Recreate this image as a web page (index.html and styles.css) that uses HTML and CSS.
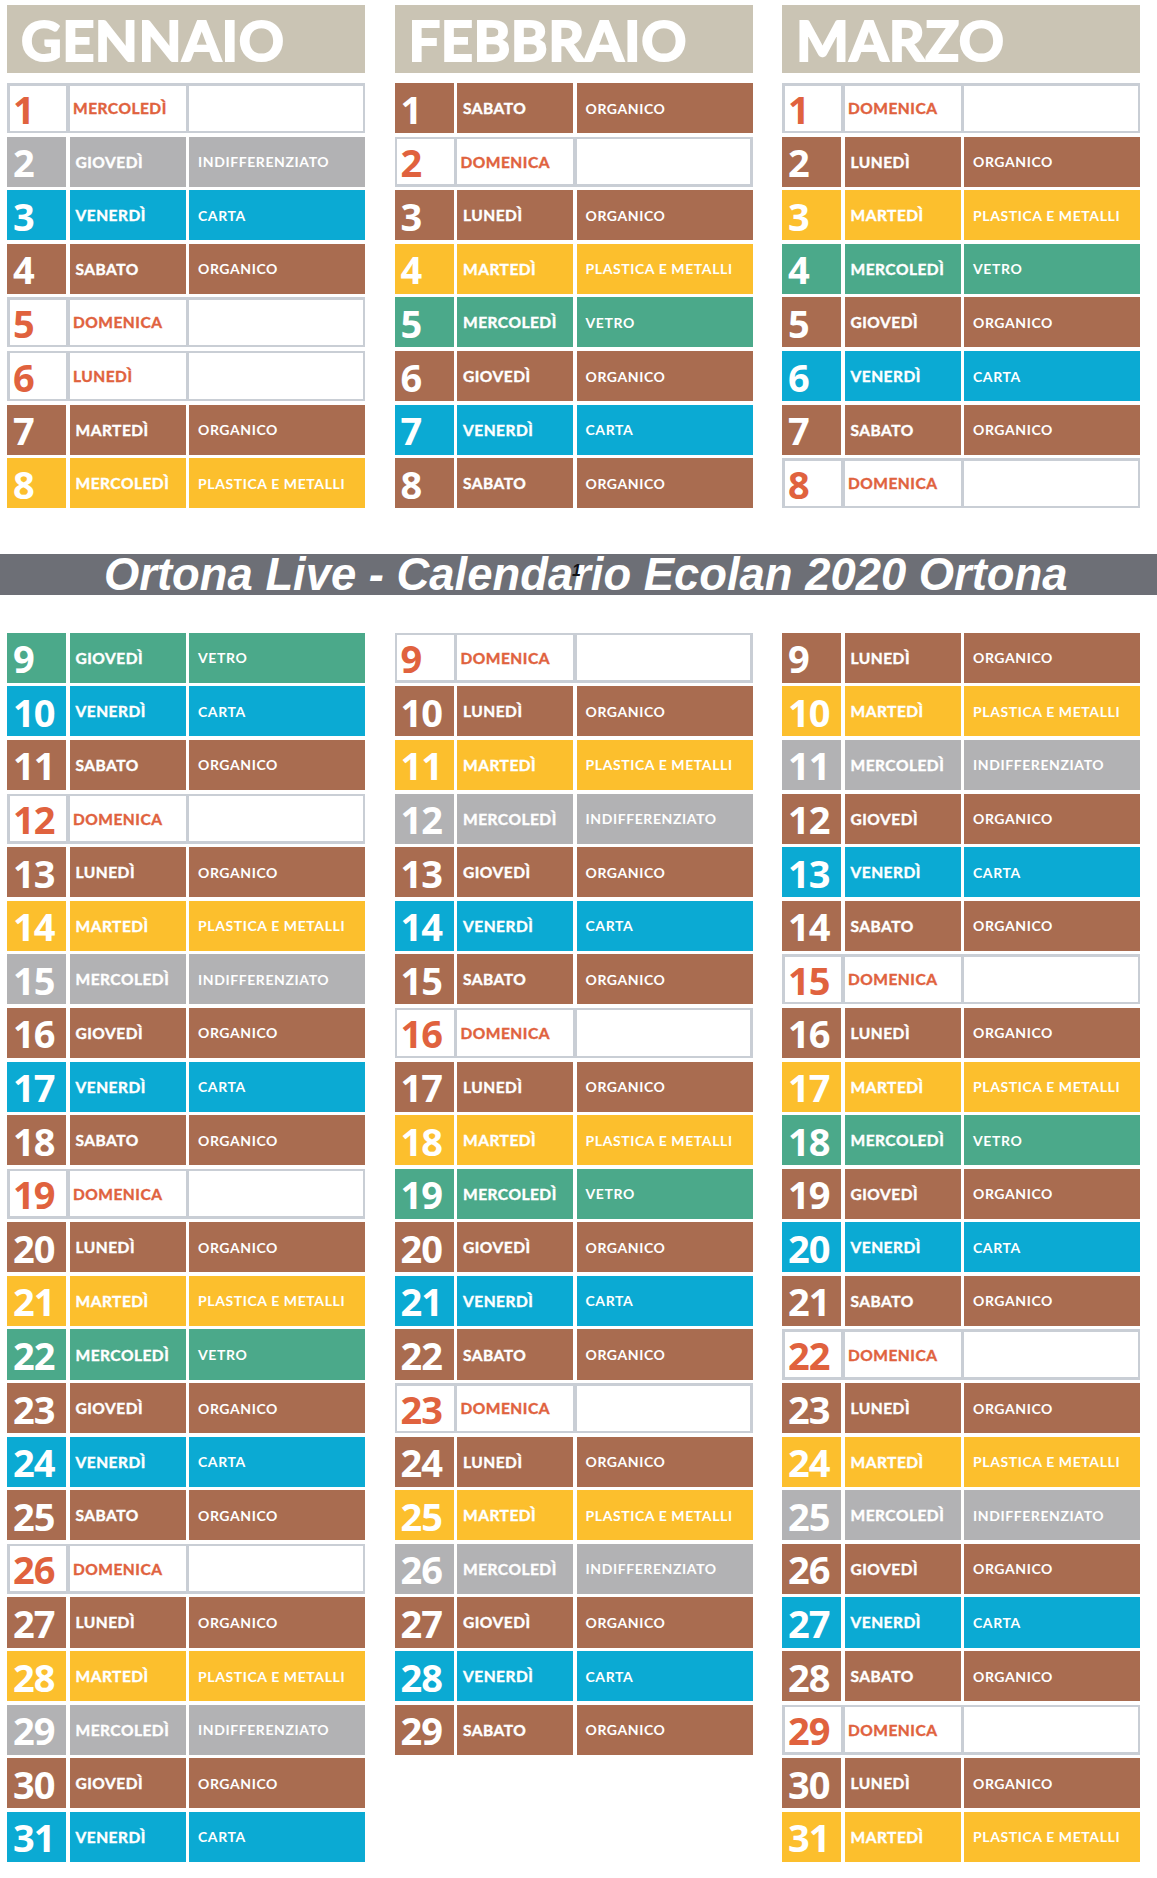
FILE: index.html
```html
<!DOCTYPE html>
<html lang="it">
<head>
<meta charset="utf-8">
<title>Ortona Live - Calendario Ecolan 2020 Ortona</title>
<link rel="stylesheet" href="styles.css">
</head>
<body>
<div class="page">
  <section class="sheet top">
    <div class="month">
      <div class="mh">GENNAIO</div>
      <div class="row off"><span class="d">1</span><span class="g">MERCOLEDÌ</span><span class="w"></span></div>
      <div class="row gray"><span class="d">2</span><span class="g">GIOVEDÌ</span><span class="w">INDIFFERENZIATO</span></div>
      <div class="row blue"><span class="d">3</span><span class="g">VENERDÌ</span><span class="w">CARTA</span></div>
      <div class="row brown"><span class="d">4</span><span class="g">SABATO</span><span class="w">ORGANICO</span></div>
      <div class="row off"><span class="d">5</span><span class="g">DOMENICA</span><span class="w"></span></div>
      <div class="row off"><span class="d">6</span><span class="g">LUNEDÌ</span><span class="w"></span></div>
      <div class="row brown"><span class="d">7</span><span class="g">MARTEDÌ</span><span class="w">ORGANICO</span></div>
      <div class="row yellow"><span class="d">8</span><span class="g">MERCOLEDÌ</span><span class="w">PLASTICA E METALLI</span></div>
    </div>
    <div class="month">
      <div class="mh">FEBBRAIO</div>
      <div class="row brown"><span class="d">1</span><span class="g">SABATO</span><span class="w">ORGANICO</span></div>
      <div class="row off"><span class="d">2</span><span class="g">DOMENICA</span><span class="w"></span></div>
      <div class="row brown"><span class="d">3</span><span class="g">LUNEDÌ</span><span class="w">ORGANICO</span></div>
      <div class="row yellow"><span class="d">4</span><span class="g">MARTEDÌ</span><span class="w">PLASTICA E METALLI</span></div>
      <div class="row green"><span class="d">5</span><span class="g">MERCOLEDÌ</span><span class="w">VETRO</span></div>
      <div class="row brown"><span class="d">6</span><span class="g">GIOVEDÌ</span><span class="w">ORGANICO</span></div>
      <div class="row blue"><span class="d">7</span><span class="g">VENERDÌ</span><span class="w">CARTA</span></div>
      <div class="row brown"><span class="d">8</span><span class="g">SABATO</span><span class="w">ORGANICO</span></div>
    </div>
    <div class="month">
      <div class="mh">MARZO</div>
      <div class="row off"><span class="d">1</span><span class="g">DOMENICA</span><span class="w"></span></div>
      <div class="row brown"><span class="d">2</span><span class="g">LUNEDÌ</span><span class="w">ORGANICO</span></div>
      <div class="row yellow"><span class="d">3</span><span class="g">MARTEDÌ</span><span class="w">PLASTICA E METALLI</span></div>
      <div class="row green"><span class="d">4</span><span class="g">MERCOLEDÌ</span><span class="w">VETRO</span></div>
      <div class="row brown"><span class="d">5</span><span class="g">GIOVEDÌ</span><span class="w">ORGANICO</span></div>
      <div class="row blue"><span class="d">6</span><span class="g">VENERDÌ</span><span class="w">CARTA</span></div>
      <div class="row brown"><span class="d">7</span><span class="g">SABATO</span><span class="w">ORGANICO</span></div>
      <div class="row off"><span class="d">8</span><span class="g">DOMENICA</span><span class="w"></span></div>
    </div>
  </section>

  <div class="banner">Ortona Live - Calendario Ecolan 2020 Ortona<span class="pgnum">1</span></div>

  <section class="sheet bottom">
    <div class="month">
      <div class="row green"><span class="d">9</span><span class="g">GIOVEDÌ</span><span class="w">VETRO</span></div>
      <div class="row blue"><span class="d">10</span><span class="g">VENERDÌ</span><span class="w">CARTA</span></div>
      <div class="row brown"><span class="d">11</span><span class="g">SABATO</span><span class="w">ORGANICO</span></div>
      <div class="row off"><span class="d">12</span><span class="g">DOMENICA</span><span class="w"></span></div>
      <div class="row brown"><span class="d">13</span><span class="g">LUNEDÌ</span><span class="w">ORGANICO</span></div>
      <div class="row yellow"><span class="d">14</span><span class="g">MARTEDÌ</span><span class="w">PLASTICA E METALLI</span></div>
      <div class="row gray"><span class="d">15</span><span class="g">MERCOLEDÌ</span><span class="w">INDIFFERENZIATO</span></div>
      <div class="row brown"><span class="d">16</span><span class="g">GIOVEDÌ</span><span class="w">ORGANICO</span></div>
      <div class="row blue"><span class="d">17</span><span class="g">VENERDÌ</span><span class="w">CARTA</span></div>
      <div class="row brown"><span class="d">18</span><span class="g">SABATO</span><span class="w">ORGANICO</span></div>
      <div class="row off"><span class="d">19</span><span class="g">DOMENICA</span><span class="w"></span></div>
      <div class="row brown"><span class="d">20</span><span class="g">LUNEDÌ</span><span class="w">ORGANICO</span></div>
      <div class="row yellow"><span class="d">21</span><span class="g">MARTEDÌ</span><span class="w">PLASTICA E METALLI</span></div>
      <div class="row green"><span class="d">22</span><span class="g">MERCOLEDÌ</span><span class="w">VETRO</span></div>
      <div class="row brown"><span class="d">23</span><span class="g">GIOVEDÌ</span><span class="w">ORGANICO</span></div>
      <div class="row blue"><span class="d">24</span><span class="g">VENERDÌ</span><span class="w">CARTA</span></div>
      <div class="row brown"><span class="d">25</span><span class="g">SABATO</span><span class="w">ORGANICO</span></div>
      <div class="row off"><span class="d">26</span><span class="g">DOMENICA</span><span class="w"></span></div>
      <div class="row brown"><span class="d">27</span><span class="g">LUNEDÌ</span><span class="w">ORGANICO</span></div>
      <div class="row yellow"><span class="d">28</span><span class="g">MARTEDÌ</span><span class="w">PLASTICA E METALLI</span></div>
      <div class="row gray"><span class="d">29</span><span class="g">MERCOLEDÌ</span><span class="w">INDIFFERENZIATO</span></div>
      <div class="row brown"><span class="d">30</span><span class="g">GIOVEDÌ</span><span class="w">ORGANICO</span></div>
      <div class="row blue"><span class="d">31</span><span class="g">VENERDÌ</span><span class="w">CARTA</span></div>
    </div>
    <div class="month">
      <div class="row off"><span class="d">9</span><span class="g">DOMENICA</span><span class="w"></span></div>
      <div class="row brown"><span class="d">10</span><span class="g">LUNEDÌ</span><span class="w">ORGANICO</span></div>
      <div class="row yellow"><span class="d">11</span><span class="g">MARTEDÌ</span><span class="w">PLASTICA E METALLI</span></div>
      <div class="row gray"><span class="d">12</span><span class="g">MERCOLEDÌ</span><span class="w">INDIFFERENZIATO</span></div>
      <div class="row brown"><span class="d">13</span><span class="g">GIOVEDÌ</span><span class="w">ORGANICO</span></div>
      <div class="row blue"><span class="d">14</span><span class="g">VENERDÌ</span><span class="w">CARTA</span></div>
      <div class="row brown"><span class="d">15</span><span class="g">SABATO</span><span class="w">ORGANICO</span></div>
      <div class="row off"><span class="d">16</span><span class="g">DOMENICA</span><span class="w"></span></div>
      <div class="row brown"><span class="d">17</span><span class="g">LUNEDÌ</span><span class="w">ORGANICO</span></div>
      <div class="row yellow"><span class="d">18</span><span class="g">MARTEDÌ</span><span class="w">PLASTICA E METALLI</span></div>
      <div class="row green"><span class="d">19</span><span class="g">MERCOLEDÌ</span><span class="w">VETRO</span></div>
      <div class="row brown"><span class="d">20</span><span class="g">GIOVEDÌ</span><span class="w">ORGANICO</span></div>
      <div class="row blue"><span class="d">21</span><span class="g">VENERDÌ</span><span class="w">CARTA</span></div>
      <div class="row brown"><span class="d">22</span><span class="g">SABATO</span><span class="w">ORGANICO</span></div>
      <div class="row off"><span class="d">23</span><span class="g">DOMENICA</span><span class="w"></span></div>
      <div class="row brown"><span class="d">24</span><span class="g">LUNEDÌ</span><span class="w">ORGANICO</span></div>
      <div class="row yellow"><span class="d">25</span><span class="g">MARTEDÌ</span><span class="w">PLASTICA E METALLI</span></div>
      <div class="row gray"><span class="d">26</span><span class="g">MERCOLEDÌ</span><span class="w">INDIFFERENZIATO</span></div>
      <div class="row brown"><span class="d">27</span><span class="g">GIOVEDÌ</span><span class="w">ORGANICO</span></div>
      <div class="row blue"><span class="d">28</span><span class="g">VENERDÌ</span><span class="w">CARTA</span></div>
      <div class="row brown"><span class="d">29</span><span class="g">SABATO</span><span class="w">ORGANICO</span></div>
    </div>
    <div class="month">
      <div class="row brown"><span class="d">9</span><span class="g">LUNEDÌ</span><span class="w">ORGANICO</span></div>
      <div class="row yellow"><span class="d">10</span><span class="g">MARTEDÌ</span><span class="w">PLASTICA E METALLI</span></div>
      <div class="row gray"><span class="d">11</span><span class="g">MERCOLEDÌ</span><span class="w">INDIFFERENZIATO</span></div>
      <div class="row brown"><span class="d">12</span><span class="g">GIOVEDÌ</span><span class="w">ORGANICO</span></div>
      <div class="row blue"><span class="d">13</span><span class="g">VENERDÌ</span><span class="w">CARTA</span></div>
      <div class="row brown"><span class="d">14</span><span class="g">SABATO</span><span class="w">ORGANICO</span></div>
      <div class="row off"><span class="d">15</span><span class="g">DOMENICA</span><span class="w"></span></div>
      <div class="row brown"><span class="d">16</span><span class="g">LUNEDÌ</span><span class="w">ORGANICO</span></div>
      <div class="row yellow"><span class="d">17</span><span class="g">MARTEDÌ</span><span class="w">PLASTICA E METALLI</span></div>
      <div class="row green"><span class="d">18</span><span class="g">MERCOLEDÌ</span><span class="w">VETRO</span></div>
      <div class="row brown"><span class="d">19</span><span class="g">GIOVEDÌ</span><span class="w">ORGANICO</span></div>
      <div class="row blue"><span class="d">20</span><span class="g">VENERDÌ</span><span class="w">CARTA</span></div>
      <div class="row brown"><span class="d">21</span><span class="g">SABATO</span><span class="w">ORGANICO</span></div>
      <div class="row off"><span class="d">22</span><span class="g">DOMENICA</span><span class="w"></span></div>
      <div class="row brown"><span class="d">23</span><span class="g">LUNEDÌ</span><span class="w">ORGANICO</span></div>
      <div class="row yellow"><span class="d">24</span><span class="g">MARTEDÌ</span><span class="w">PLASTICA E METALLI</span></div>
      <div class="row gray"><span class="d">25</span><span class="g">MERCOLEDÌ</span><span class="w">INDIFFERENZIATO</span></div>
      <div class="row brown"><span class="d">26</span><span class="g">GIOVEDÌ</span><span class="w">ORGANICO</span></div>
      <div class="row blue"><span class="d">27</span><span class="g">VENERDÌ</span><span class="w">CARTA</span></div>
      <div class="row brown"><span class="d">28</span><span class="g">SABATO</span><span class="w">ORGANICO</span></div>
      <div class="row off"><span class="d">29</span><span class="g">DOMENICA</span><span class="w"></span></div>
      <div class="row brown"><span class="d">30</span><span class="g">LUNEDÌ</span><span class="w">ORGANICO</span></div>
      <div class="row yellow"><span class="d">31</span><span class="g">MARTEDÌ</span><span class="w">PLASTICA E METALLI</span></div>
    </div>
  </section>
</div>
</body>
</html>
```

FILE: styles.css
```css
* { box-sizing: border-box; }

html, body {
  margin: 0;
  padding: 0;
  background: #ffffff;
}

.page {
  width: 1157px;
  height: 1878px;
  padding-top: 5px;
  overflow: hidden;
  font-family: "Lato", "Open Sans", sans-serif;
}

.sheet {
  display: grid;
  grid-template-columns: 358px 358px 358px;
  column-gap: 29.5px;
  padding-left: 7px;
  align-items: start;
}

.bottom { margin-top: 38px; }

.mh {
  height: 68px;
  margin-bottom: 10px;
  background: #cac4b4;
  color: #ffffff;
  font-family: "Lato", sans-serif;
  font-weight: 700;
  font-size: 56px;
  letter-spacing: 0.5px;
  -webkit-text-stroke: 2px #ffffff;
  padding-left: 14px;
  display: flex;
  align-items: center;
}

.row {
  display: grid;
  grid-template-columns: 59px 116px 1fr;
  column-gap: 3.5px;
  height: 50.1px;
  margin-bottom: 3.5px;
  color: #ffffff;
}

.row > span {
  display: flex;
  align-items: center;
  background: var(--c);
  white-space: nowrap;
}

.d {
  font-family: "Open Sans", sans-serif;
  font-weight: 700;
  font-size: 38px;
  line-height: 40px;
  letter-spacing: -1px;
  padding-left: 6px;
  padding-top: 1px;
}

.g {
  font-family: "Lato", sans-serif;
  font-weight: 700;
  font-size: 15.5px;
  letter-spacing: 0.5px;
  padding-left: 6px;
  -webkit-text-stroke: 0.4px currentColor;
}

.w {
  font-family: "Lato", sans-serif;
  font-weight: 700;
  font-size: 14px;
  letter-spacing: 0.6px;
  padding-left: 9px;
}

.brown  { --c: #a96c50; }
.gray   { --c: #b2b2b4; }
.blue   { --c: #0baad3; }
.yellow { --c: #fcbf2d; }
.green  { --c: #4ba98a; }

.off {
  --c: #ffffff;
  background: #c9ced5;
  padding: 2.5px;
  grid-template-columns: 56.5px 116px 1fr;
  color: #e0623e;
}
.off .d { padding-left: 3.5px; }
.off .g { padding-left: 3.5px; }

.banner {
  position: relative;
  margin-top: 42px;
  height: 41px;
  background: #6d6f76;
  color: #ffffff;
  font-family: "Liberation Sans", Arial, sans-serif;
  font-weight: 700;
  font-style: italic;
  font-size: 45.4px;
  line-height: 41px;
  padding-left: 104px;
  white-space: nowrap;
}

.pgnum {
  position: absolute;
  left: 572px;
  top: 9px;
  font-size: 16px;
  line-height: 16px;
  color: #111114;
  font-weight: 700;
}
```
